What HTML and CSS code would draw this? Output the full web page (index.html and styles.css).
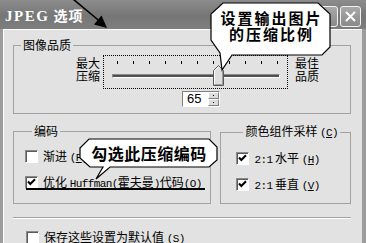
FILE: index.html
```html
<!DOCTYPE html>
<html lang="zh-CN">
<head>
    <meta charset="UTF-8">
    <title>JPEG 选项</title>
    <link rel="stylesheet" href="styles.css">
</head>
<body>
    <div class="window">
        <div class="titlebar">
            <span class="title"><span class="title-en">JPEG</span> 选项</span>
            <div class="caption-btns">
                <span class="cap-btn">?</span>
                <span class="cap-btn">
                    <svg width="11" height="11" viewBox="0 0 11 11"><path d="M1 1L10 10M10 1L1 10" stroke="#fff" stroke-width="2"/></svg>
                </span>
            </div>
        </div>

        <div class="client">
            <fieldset class="group quality">
                <legend>图像品质</legend>
                <div class="slider-row">
                    <div class="end-label"><div>最大</div><div>压缩</div></div>
                    <div class="slider">
                        <div class="ticks">
                            <i></i><i></i><i></i><i></i><i></i><i></i><i></i><i></i><i></i><i></i><i></i>
                        </div>
                        <div class="track"></div>
                        <svg class="thumb" width="11" height="21" viewBox="0 0 11 21">
                            <path d="M0.5 20.5V5.5L5.5 0.5L10.5 5.5V20.5Z" fill="#dedede" stroke="#5a5a5a"/>
                            <path d="M1.5 19.5V5.9L5.5 1.9" fill="none" stroke="#fff"/>
                            <path d="M9.5 6V19.5H1.5" fill="none" stroke="#9a9a9a"/>
                        </svg>
                    </div>
                    <div class="end-label"><div>最佳</div><div>品质</div></div>
                </div>
                <div class="spin">
                    <span class="spin-val">65</span>
                    <span class="spin-btns"><b></b><b></b></span>
                </div>
            </fieldset>

            <div class="group-row">
                <fieldset class="group encoding">
                    <legend>编码</legend>
                    <div class="check">
                        <span class="box"></span>
                        <span>渐进 <span class="en">(<u>P</u>)</span></span>
                    </div>
                    <div class="check focused">
                        <span class="box checked"><svg width="11" height="11" viewBox="0 0 11 11"><path d="M2 4.5L4.3 7L9 2.2" fill="none" stroke="#000" stroke-width="2"/></svg></span>
                        <span>优化 <span class="en">Huffman(</span>霍夫曼<span class="en">)</span>代码<span class="en">(<u>O</u>)</span></span>
                    </div>
                </fieldset>
                <fieldset class="group sampling">
                    <legend>颜色组件采样 <span class="en">(<u>C</u>)</span></legend>
                    <div class="check">
                        <span class="box checked"><svg width="11" height="11" viewBox="0 0 11 11"><path d="M2 4.5L4.3 7L9 2.2" fill="none" stroke="#000" stroke-width="2"/></svg></span>
                        <span><span class="en">2:1</span> 水平 <span class="en">(<u>H</u>)</span></span>
                    </div>
                    <div class="check">
                        <span class="box checked"><svg width="11" height="11" viewBox="0 0 11 11"><path d="M2 4.5L4.3 7L9 2.2" fill="none" stroke="#000" stroke-width="2"/></svg></span>
                        <span><span class="en">2:1</span> 垂直 <span class="en">(<u>V</u>)</span></span>
                    </div>
                </fieldset>
            </div>

            <div class="separator"></div>

            <div class="check save">
                <span class="box"></span>
                <span>保存这些设置为默认值 <span class="en">(<u>S</u>)</span></span>
            </div>
        </div>

        <!-- 说明用的箭头和标注 -->
        <svg class="arrow" width="60" height="32" viewBox="0 0 60 32">
            <path d="M13 -1L40 21.5" stroke="#000" stroke-width="1.6"/>
            <path d="M47 28L34 24.5L41.5 15.5Z" fill="#000"/>
        </svg>

        <div class="callout callout-quality">
            <svg class="callout-shape" width="121" height="70" viewBox="0 0 121 70">
                <path d="M13 1H108L120 12V45L112 53H22L12 68L10 51L1 38V12Z" fill="#fff" stroke="#000" stroke-width="1.2"/>
            </svg>
            <div class="callout-text"><div>设置输出图片</div><div>的压缩比例</div></div>
        </div>

        <div class="callout callout-encode">
            <svg class="callout-shape" width="140" height="43" viewBox="0 0 140 43">
                <path d="M10 1H130L138 9V22L130 29H31L17 41L24 29H11L1 20V10Z" fill="#fff" stroke="#000" stroke-width="1.2"/>
            </svg>
            <div class="callout-text">勾选此压缩编码</div>
        </div>
    </div>
</body>
</html>
```

FILE: styles.css
```css
body {
    margin: 0;
    padding: 0;
    background: #e2e2e2;
    font-family: "Noto Sans CJK SC", sans-serif;
    font-size: 12px;
    color: #000;
}

.window {
    position: relative;
    width: 366px;
    height: 243px;
    overflow: hidden;
    background: #e2e2e2;
}

/* 标题栏 */
.titlebar {
    height: 29px;
    display: flex;
    align-items: center;
    justify-content: space-between;
    padding-left: 5px;
    box-sizing: border-box;
    background: linear-gradient(#8c8c8c, #767676 55%, #7e7e7e);
}

.title {
    color: #fff;
    font-size: 14px;
    font-weight: bold;
    letter-spacing: 1px;
}

.title-en {
    font-family: "Liberation Serif", serif;
    font-size: 15px;
    letter-spacing: 1.5px;
}

.caption-btns {
    display: flex;
    gap: 2px;
    margin-right: 5px;
    margin-top: 4px;
}

.cap-btn {
    width: 21px;
    height: 21px;
    box-sizing: border-box;
    display: flex;
    align-items: center;
    justify-content: center;
    border: 1px solid #f2f2f2;
    border-radius: 3px;
    background: linear-gradient(#a8a8a8, #8a8a8a);
    color: #fff;
    font-weight: bold;
}

/* 客户区 */
.client {
    height: 214px;
    box-sizing: border-box;
    padding: 9px 11px 0 10px;
    border-left: 3px solid #9c9c9c;
    border-right: 4px solid #9c9c9c;
    box-shadow: inset 1px 1px 0 #fff;
}

.group {
    margin: 0;
    padding: 0;
    min-width: 0;
    box-sizing: border-box;
    border: 1px solid #a2a2a2;
}

.group legend {
    margin-left: 7px;
    padding: 0 2px;
    font-size: 12px;
    line-height: 14px;
}

.quality {
    width: 338px;
    padding: 3px 0 6px 0;
}

.slider-row {
    display: flex;
    padding-left: 62px;
}

.end-label {
    width: 24px;
    margin-top: 1px;
}

.end-label div {
    height: 13px;
    line-height: 13px;
}

.slider {
    position: relative;
    width: 185px;
    height: 34px;
    box-sizing: border-box;
    margin: 0 7px 0 3px;
    border: 1px dotted #000;
}

.ticks {
    display: flex;
    justify-content: space-between;
    width: 161px;
    height: 3px;
    margin: 5px 0 0 13px;
}

.ticks i {
    width: 1px;
    background: #000;
}

.track {
    width: 168px;
    height: 4px;
    box-sizing: border-box;
    margin: 10px 0 0 8px;
    border-top: 1px solid #888;
    border-left: 1px solid #888;
    border-bottom: 1px solid #fff;
    border-right: 1px solid #fff;
    background: #505050;
}

.thumb {
    position: absolute;
    left: 109px;
    top: 9px;
}

.spin {
    display: flex;
    width: 38px;
    height: 16px;
    box-sizing: border-box;
    margin: 2px 0 0 168px;
    background: #fff;
    border: 1px solid;
    border-color: #808080 #fff #fff #808080;
}

.spin-val {
    flex: 1;
    padding-left: 4px;
    font-family: "Liberation Sans", sans-serif;
    font-size: 13px;
    line-height: 14px;
}

.spin-btns {
    display: flex;
    flex-direction: column;
    width: 11px;
}

.spin-btns b {
    flex: 1;
    background: #dcdcdc;
    border: 1px solid;
    border-color: #fff #808080 #808080 #fff;
    position: relative;
}

.spin-btns b::after {
    content: "";
    position: absolute;
    left: 4px;
    top: 2px;
    width: 1px;
    height: 1px;
    background: #000;
}

.group-row {
    display: flex;
    gap: 9px;
    margin-top: 10px;
}

.encoding {
    width: 199px;
    height: 80px;
    padding: 12px 0 0 11px;
}

.sampling {
    width: 131px;
    height: 80px;
    padding: 12px 0 0 15px;
}

.check {
    display: flex;
    align-items: center;
    gap: 5px;
    height: 13px;
    line-height: 13px;
    white-space: nowrap;
}

.check + .check {
    margin-top: 13px;
}

.focused {
    position: relative;
    width: 180px;
}

.focused::after {
    content: "";
    position: absolute;
    left: 1px;
    right: 0;
    bottom: -1px;
    height: 2px;
    background: #000;
}

.box {
    flex: none;
    width: 13px;
    height: 13px;
    box-sizing: border-box;
    display: flex;
    align-items: center;
    justify-content: center;
    background: #fff;
    border: 1px solid;
    border-color: #8a8a8a #fff #fff #8a8a8a;
    box-shadow: inset 1px 1px 0 #5a5a5a;
}

.en {
    font-family: "Liberation Mono", monospace;
    font-size: 11px;
    letter-spacing: -0.6px;
}

.separator {
    width: 338px;
    margin-top: 13px;
    border-top: 1px solid #a2a2a2;
    border-bottom: 1px solid #fff;
}

.save {
    margin: 12px 0 0 13px;
}

/* 标注 */
.arrow {
    position: absolute;
    left: 60px;
    top: 0;
}

.callout {
    position: absolute;
}

.callout-shape {
    position: absolute;
    left: 0;
    top: 0;
}

.callout-text {
    position: relative;
    text-align: center;
    font-weight: bold;
    color: #000;
}

.callout-quality {
    left: 210px;
    top: 2px;
    width: 121px;
    height: 70px;
}

.callout-quality .callout-text {
    padding-top: 8px;
    font-size: 15px;
    letter-spacing: 2px;
    text-indent: 2px;
}

.callout-quality .callout-text div {
    height: 16px;
    line-height: 16px;
}

.callout-encode {
    left: 79px;
    top: 138px;
    width: 140px;
    height: 43px;
}

.callout-encode .callout-text {
    padding-top: 5px;
    font-size: 16px;
    line-height: 20px;
    letter-spacing: 0.5px;
}
```
